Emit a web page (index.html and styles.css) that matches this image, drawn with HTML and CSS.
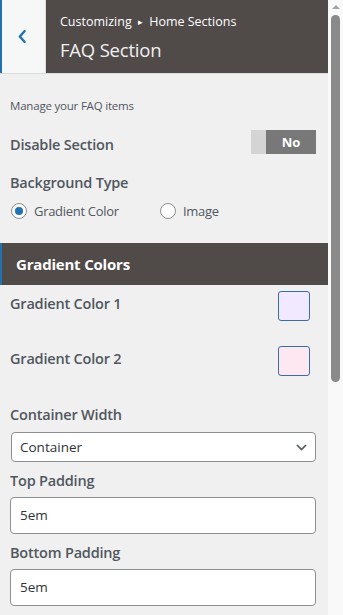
FILE: index.html
```html
<!DOCTYPE html>
<html lang="en">
<head>
    <meta charset="UTF-8">
    <meta name="viewport" content="width=device-width, initial-scale=1.0">
    <title>FAQ Section - Customizing</title>
    <link rel="stylesheet" href="styles.css">
</head>
<body>
    <div class="customizer">
        <div class="panel">
            <div class="panel-header">
                <button class="back-btn" aria-label="Back">
                    <svg width="8" height="13" viewBox="0 0 8 13">
                        <path d="M6.5 1.2 L1.8 6.5 L6.5 11.8" fill="none" stroke="#2271b1" stroke-width="2.4" stroke-linecap="round" stroke-linejoin="round"/>
                    </svg>
                </button>
                <div class="header-titles">
                    <div class="breadcrumb">Customizing <span class="crumb-arrow">&#9656;</span> Home Sections</div>
                    <h1>FAQ Section</h1>
                </div>
            </div>

            <div class="panel-body">
                <p class="description">Manage your FAQ items</p>

                <div class="control-row">
                    <span class="control-title">Disable Section</span>
                    <div class="toggle">
                        <span class="toggle-off"></span>
                        <span class="toggle-label">No</span>
                    </div>
                </div>

                <div class="control-title block-title">Background Type</div>
                <div class="radio-group">
                    <label class="radio-option wide">
                        <span class="radio checked"></span>
                        Gradient Color
                    </label>
                    <label class="radio-option">
                        <span class="radio"></span>
                        Image
                    </label>
                </div>
            </div>

            <div class="section-bar">Gradient Colors</div>

            <div class="panel-body">
                <div class="color-row">
                    <span class="control-title">Gradient Color 1</span>
                    <span class="swatch lavender"></span>
                </div>
                <div class="color-row second">
                    <span class="control-title">Gradient Color 2</span>
                    <span class="swatch pink"></span>
                </div>

                <div class="control-title field-title first-field">Container Width</div>
                <div class="select-box">
                    <span>Container</span>
                    <svg width="11" height="7" viewBox="0 0 11 7">
                        <path d="M1 1 L5.5 5.5 L10 1" fill="none" stroke="#50575e" stroke-width="1.6"/>
                    </svg>
                </div>

                <div class="control-title field-title">Top Padding</div>
                <div class="text-input">5em</div>

                <div class="control-title field-title">Bottom Padding</div>
                <div class="text-input">5em</div>
            </div>
        </div>

        <div class="scrollbar">
            <span class="scroll-arrow"></span>
            <span class="scroll-thumb"></span>
        </div>
    </div>
</body>
</html>
```

FILE: styles.css
```css
* {
    margin: 0;
    padding: 0;
    box-sizing: border-box;
}

body {
    width: 343px;
    height: 615px;
    overflow: hidden;
    font-family: "Segoe UI", "Open Sans", sans-serif;
    background-color: #f0f0f1;
    color: #50575e;
}

.customizer {
    display: flex;
    height: 615px;
}

.panel {
    width: 328px;
    height: 615px;
    overflow: hidden;
    background-color: #f0f0f1;
}

/* header */
.panel-header {
    display: flex;
    height: 74px;
    border-bottom: 1px solid #dcdcde;
}

.back-btn {
    width: 46px;
    height: 73px;
    border: none;
    border-left: 2px solid #2271b1;
    border-right: 1px solid #dcdcde;
    background-color: #f6f7f7;
    display: flex;
    align-items: center;
    justify-content: center;
    padding-right: 3px;
}

.header-titles {
    flex: 1;
    background-color: #504a49;
    padding: 12px 0 0 14px;
    color: #fff;
}

.breadcrumb {
    font-size: 12.5px;
    line-height: 20px;
}

.crumb-arrow {
    font-size: 9px;
    margin: 0 3px;
    vertical-align: 1px;
}

h1 {
    margin-top: 4px;
    font-size: 18.5px;
    font-weight: 400;
    line-height: 28px;
    letter-spacing: -0.2px;
    color: #f0f0f1;
}

/* body */
.panel-body {
    padding: 0 12px 0 10px;
}

.description {
    font-size: 11.5px;
    line-height: 16px;
    letter-spacing: -0.2px;
    padding-top: 24px;
}

.control-title {
    font-size: 14.5px;
    font-weight: 600;
    line-height: 20px;
    letter-spacing: -0.2px;
    color: #50575e;
}

.control-row {
    display: flex;
    justify-content: space-between;
    align-items: flex-start;
    margin-top: 16px;
}

.control-row .control-title {
    line-height: 28px;
    padding-top: 1px;
}

.toggle {
    display: flex;
    height: 24px;
}

.toggle-off {
    width: 15px;
    background-color: #d4d4d4;
}

.toggle-label {
    width: 50px;
    background-color: #787878;
    color: #fff;
    font-size: 13px;
    font-weight: 700;
    line-height: 24px;
    text-align: center;
}

.block-title {
    margin-top: 14px;
}

.radio-group {
    display: flex;
    margin-top: 8px;
    padding-left: 1px;
}

.radio-option {
    display: flex;
    align-items: center;
    gap: 7px;
    font-size: 13px;
    line-height: 20px;
    letter-spacing: -0.3px;
}

.radio-option.wide {
    width: 149px;
}

.radio {
    width: 16px;
    height: 16px;
    border: 1px solid #8c8f94;
    border-radius: 50%;
    background-color: #fff;
    display: flex;
    align-items: center;
    justify-content: center;
}

.radio.checked::before {
    content: "";
    width: 8px;
    height: 8px;
    border-radius: 50%;
    background-color: #2271b1;
}

.section-bar {
    margin-top: 22px;
    height: 42px;
    background-color: #504a49;
    border-left: 2px solid #2271b1;
    color: #fff;
    font-size: 15px;
    font-weight: 700;
    line-height: 42px;
    letter-spacing: -0.2px;
    padding-left: 14px;
}

.color-row {
    display: flex;
    justify-content: space-between;
    align-items: flex-start;
    margin-top: 6px;
    padding-right: 6px;
}

.color-row.second {
    margin-top: 25px;
}

.color-row .control-title {
    line-height: 26px;
}

.swatch {
    width: 32px;
    height: 30px;
    border: 1px solid #3a6ea5;
    border-radius: 3px;
}

.swatch.lavender {
    background-color: #f1e9ff;
}

.swatch.pink {
    background-color: #fde7f1;
}

.field-title {
    margin-top: 9px;
}

.field-title.first-field {
    margin-top: 29px;
}

.select-box {
    margin-top: 7px;
    margin-left: 1px;
    height: 30px;
    background-color: #fff;
    border: 1px solid #8c8f94;
    border-radius: 4px;
    display: flex;
    align-items: center;
    justify-content: space-between;
    padding: 0 8px 0 8px;
    font-size: 13.5px;
    color: #2c3338;
}

.text-input {
    margin-top: 6px;
    height: 37px;
    background-color: #fff;
    border: 1px solid #8c8f94;
    border-radius: 4px;
    padding-left: 9px;
    font-size: 13.5px;
    line-height: 35px;
    color: #2c3338;
}

/* scrollbar */
.scrollbar {
    width: 15px;
    background-color: #f9f9f9;
    display: flex;
    flex-direction: column;
    align-items: center;
}

.scroll-arrow {
    margin-top: 5px;
    width: 0;
    height: 0;
    border-left: 4px solid transparent;
    border-right: 4px solid transparent;
    border-bottom: 4px solid #a3a3a3;
}

.scroll-thumb {
    margin-top: 6px;
    width: 9px;
    height: 367px;
    border-radius: 5px;
    background-color: #8a8a8a;
}
```
